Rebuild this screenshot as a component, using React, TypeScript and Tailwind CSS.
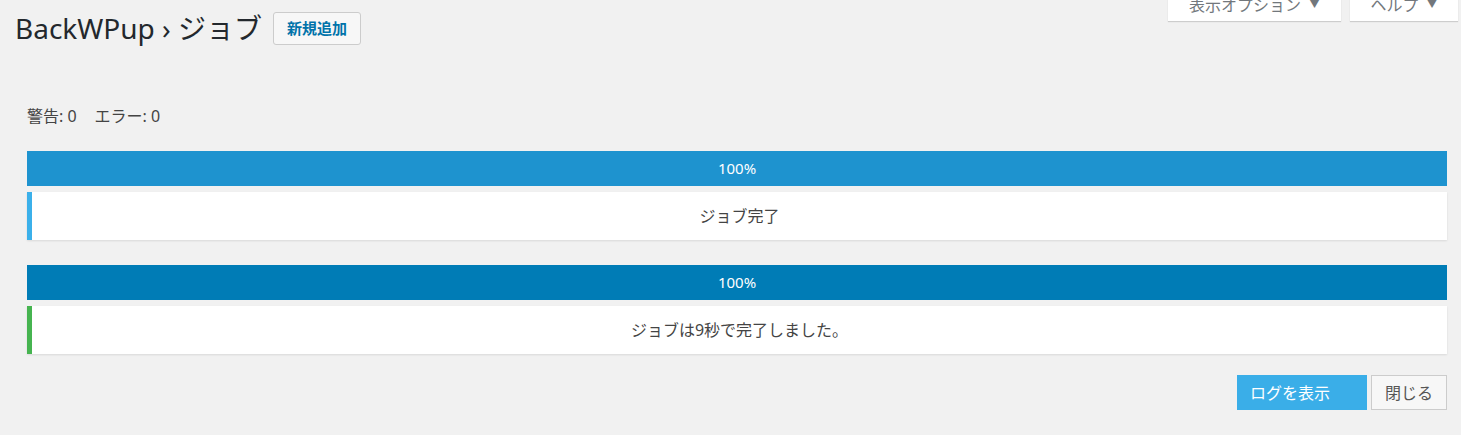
import React from "react";

const font = "font-['Noto_Sans','Noto_Sans_CJK_JP',sans-serif]";

const Progress = ({ bar, edge, text }: { bar: string; edge: string; text: string }) => (
    <div className="flex flex-col gap-[6px]">
        <div className={`h-[35px] flex items-center justify-center text-white text-[15px] ${bar}`}>100%</div>
        <div className={`h-[48px] bg-white border-l-[5px] flex items-center justify-center text-[16px] text-[#444] shadow-[0_1px_2px_rgba(0,0,0,0.1)] ${edge}`}>
            {text}
        </div>
    </div>
);

const App = () => {
    return (
        <div className={`w-full min-h-[435px] bg-[#f1f1f1] ${font}`}>
            <div className="flex justify-between items-start">
                <div className="flex items-center gap-[11px] pl-[15px] pt-[12px]">
                    <h1 className="text-[28px] leading-[33px] text-[#23282d]">BackWPup › ジョブ</h1>
                    <button className="h-[33px] w-[88px] bg-[#f7f7f7] border border-[#ccc] rounded-[3px] text-[15px] font-bold text-[#0073aa]">新規追加</button>
                </div>
                <div className="flex gap-[9px] pr-[3px] -mt-[12px]">
                    <div className="h-[33px] w-[173px] bg-white shadow-[0_1px_1px_rgba(0,0,0,0.15)] flex items-center justify-center text-[16px] text-[#72777c]">
                        表示オプション<span className="ml-[8px] text-[11px]">▼</span>
                    </div>
                    <div className="h-[33px] w-[108px] bg-white shadow-[0_1px_1px_rgba(0,0,0,0.15)] flex items-center justify-center text-[16px] text-[#72777c]">
                        ヘルプ<span className="ml-[8px] text-[11px]">▼</span>
                    </div>
                </div>
            </div>
            <div className="px-[14px] pl-[27px]">
                <p className="mt-[61px] h-[20px] leading-[20px] text-[16px] text-[#444]">
                    警告: 0<span className="ml-[18px]">エラー: 0</span>
                </p>
                <div className="mt-[25px] flex flex-col gap-[25px]">
                    <Progress bar="bg-[#1e93cf]" edge="border-[#3bb0ea]" text="ジョブ完了" />
                    <Progress bar="bg-[#007cb6]" edge="border-[#46b450]" text="ジョブは9秒で完了しました。" />
                </div>
                <div className="mt-[21px] flex justify-end gap-[4px]">
                    <button className="h-[35px] w-[130px] bg-[#3aaee8] text-white text-[16px] text-left pl-[13px]">ログを表示</button>
                    <button className="h-[35px] w-[76px] bg-[#f7f7f7] border border-[#ccc] text-[16px] text-[#555]">閉じる</button>
                </div>
            </div>
        </div>
    );
};

export default App;
